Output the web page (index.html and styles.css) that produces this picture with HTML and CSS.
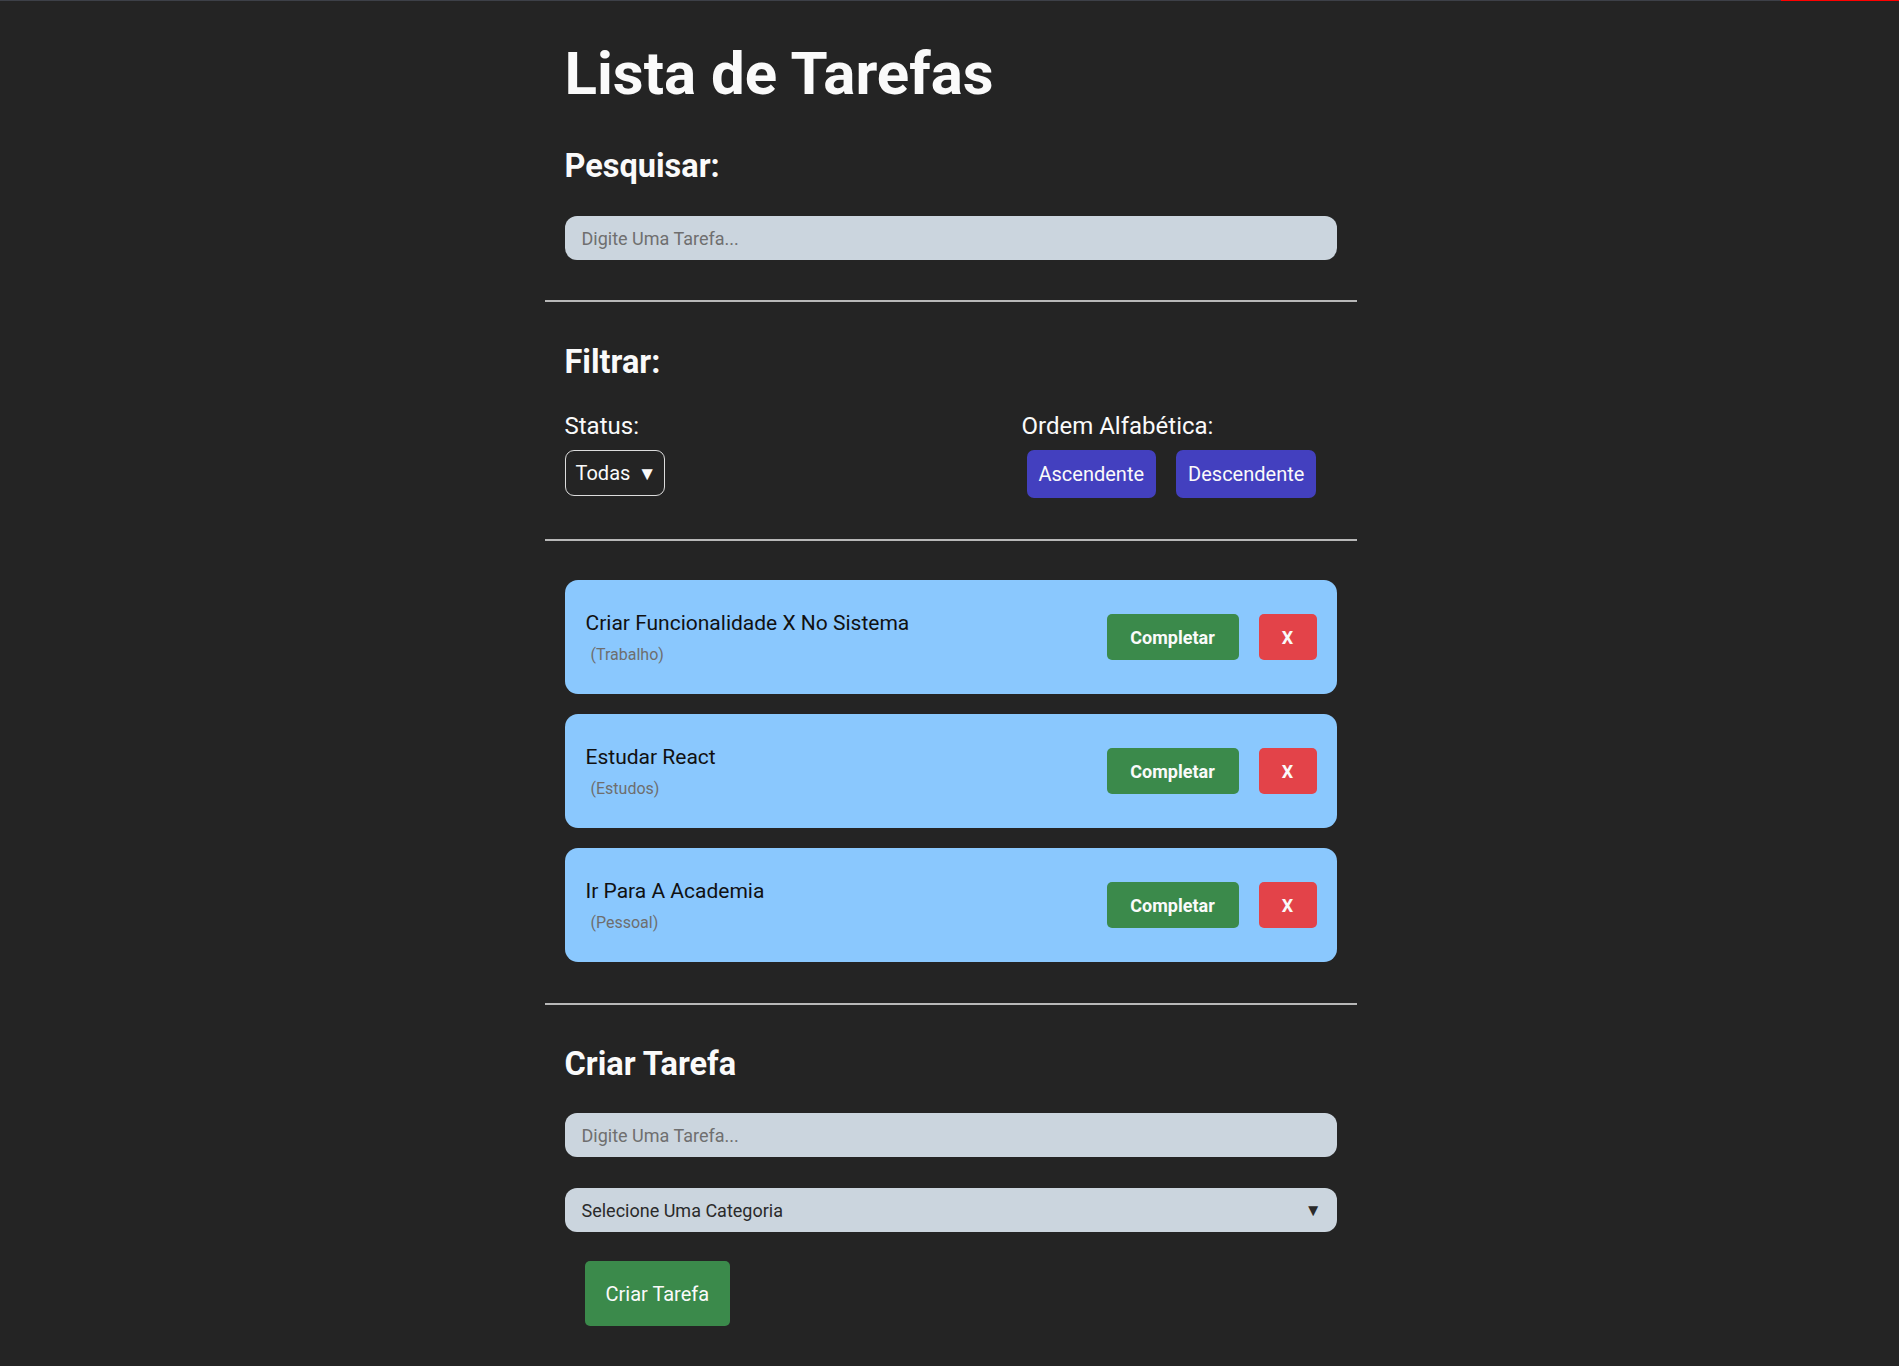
FILE: index.html
```html
<!DOCTYPE html>
<html lang="pt-BR">
<head>
<meta charset="utf-8">
<title>Lista de Tarefas</title>
<link rel="stylesheet" href="styles.css">
</head>
<body>
<div class="topline"></div>
<main class="app">
  <h1 class="title">Lista de Tarefas</h1>

  <section class="block">
    <h2 class="heading heading-search">Pesquisar:</h2>
    <input class="field field-search" type="text" placeholder="Digite Uma Tarefa...">
  </section>

  <hr class="divider">

  <section class="block">
    <h2 class="heading heading-filter">Filtrar:</h2>
    <div class="filter-row">
      <div class="filter-group">
        <p class="label">Status:</p>
        <div class="status-select"><span>Todas</span><span class="tri">▼</span></div>
      </div>
      <div class="filter-group filter-order">
        <p class="label">Ordem Alfabética:</p>
        <div class="order-buttons">
          <button class="btn-order">Ascendente</button>
          <button class="btn-order">Descendente</button>
        </div>
      </div>
    </div>
  </section>

  <hr class="divider divider-tasks">

  <section class="block tasks">
    <div class="task">
      <div class="task-text">
        <p class="task-name">Criar Funcionalidade X No Sistema</p>
        <p class="task-cat">(Trabalho)</p>
      </div>
      <div class="task-actions">
        <button class="btn-complete">Completar</button>
        <button class="btn-remove">X</button>
      </div>
    </div>
    <div class="task">
      <div class="task-text">
        <p class="task-name">Estudar React</p>
        <p class="task-cat">(Estudos)</p>
      </div>
      <div class="task-actions">
        <button class="btn-complete">Completar</button>
        <button class="btn-remove">X</button>
      </div>
    </div>
    <div class="task">
      <div class="task-text">
        <p class="task-name">Ir Para A Academia</p>
        <p class="task-cat">(Pessoal)</p>
      </div>
      <div class="task-actions">
        <button class="btn-complete">Completar</button>
        <button class="btn-remove">X</button>
      </div>
    </div>
  </section>

  <hr class="divider divider-create">

  <section class="block">
    <h2 class="heading heading-create">Criar Tarefa</h2>
    <input class="field field-new" type="text" placeholder="Digite Uma Tarefa...">
    <div class="field field-select"><span>Selecione Uma Categoria</span><span class="tri tri-dark">▼</span></div>
    <button class="btn-create">Criar Tarefa</button>
  </section>
</main>
</body>
</html>
```

FILE: styles.css
```css
* { box-sizing: border-box; }

html, body {
  margin: 0;
  padding: 0;
  background: #242424;
}

body {
  font-family: Roboto, "Noto Sans", sans-serif;
  color: #f8f8f8;
}

.topline {
  height: 1px;
  background: linear-gradient(to right, #3d4048 0, #3d4048 1781px, #ff0000 1781px);
}

.app {
  width: 812px;
  margin: 0 0 0 calc(50% - 405px);
  padding-bottom: 40px;
}

.block {
  padding: 0 20px;
}

.title {
  margin: 38px 0 0 0;
  padding: 0 20px;
  font-size: 60px;
  line-height: 70px;
  font-weight: 700;
  color: #fafafa;
}

.heading {
  margin: 0;
  font-size: 32.5px;
  line-height: 37px;
  font-weight: 700;
  color: #fafafa;
}

.heading-search { margin-top: 39px; }
.heading-filter { margin-top: 42px; }
.heading-create { margin-top: 41px; }

.field {
  display: block;
  width: 100%;
  height: 44px;
  border: none;
  border-radius: 12px;
  background: #cbd5de;
  font-family: Roboto, sans-serif;
  font-size: 18px;
  color: #2a2a2a;
  padding: 0 15px 0 17px;
  outline: none;
}

.field::placeholder {
  color: #6f6f6f;
}

.field-search { margin-top: 31px; }
.field-new { margin-top: 30px; }

.field-select {
  margin-top: 31px;
  display: flex;
  align-items: center;
  justify-content: space-between;
}

.divider {
  margin: 40px 0 0 0;
  height: 0;
  border: none;
  border-top: 2px solid #b8b8b8;
}

.divider-tasks { margin-top: 41px; }
.divider-create { margin-top: 41px; }

.filter-row {
  margin-top: 31px;
  display: flex;
  justify-content: space-between;
}

.filter-order {
  width: 295px;
  margin-right: 20px;
}

.label {
  margin: 0;
  font-size: 24px;
  line-height: 28px;
  color: #fafafa;
}

.status-select {
  margin-top: 10px;
  width: 100px;
  height: 46px;
  border: 1px solid #dcdcdc;
  border-radius: 9px;
  display: flex;
  align-items: center;
  justify-content: space-between;
  padding: 0 7px 0 10px;
  font-size: 20px;
  color: #fafafa;
}

.tri {
  font-size: 19px;
  line-height: 1;
}

.tri-dark {
  color: #2a2a2a;
  font-size: 17px;
}

.order-buttons {
  margin-top: 10px;
  padding-left: 5px;
  display: flex;
  gap: 20px;
}

.btn-order {
  height: 48px;
  padding: 0 12px;
  border: none;
  border-radius: 7px;
  background: #4340bf;
  color: #fafafa;
  font-family: Roboto, sans-serif;
  font-size: 20px;
}

.tasks {
  margin-top: 39px;
  display: flex;
  flex-direction: column;
  gap: 20px;
}

.task {
  height: 114px;
  background: #8ac8fe;
  border-radius: 13px;
  padding: 0 20px 0 21px;
  display: flex;
  align-items: center;
  justify-content: space-between;
}

.task-name {
  margin: 0;
  font-size: 21px;
  line-height: 24px;
  color: #111111;
}

.task-cat {
  margin: 11px 0 0 0;
  padding-left: 5px;
  font-size: 16px;
  line-height: 18px;
  color: #6e6e6e;
}

.task-actions {
  display: flex;
  gap: 20px;
}

.btn-complete,
.btn-remove {
  height: 46px;
  border: none;
  border-radius: 5px;
  color: #fafafa;
  font-family: Roboto, sans-serif;
  font-size: 18px;
  font-weight: 700;
}

.btn-complete {
  width: 132px;
  background: #3b8a4b;
}

.btn-remove {
  width: 58px;
  background: #e34349;
}

.btn-create {
  display: block;
  margin: 29px 0 0 20px;
  height: 65px;
  padding: 0 21px;
  border: none;
  border-radius: 5px;
  background: #3b8a4b;
  color: #fafafa;
  font-family: Roboto, sans-serif;
  font-size: 20px;
}
```
